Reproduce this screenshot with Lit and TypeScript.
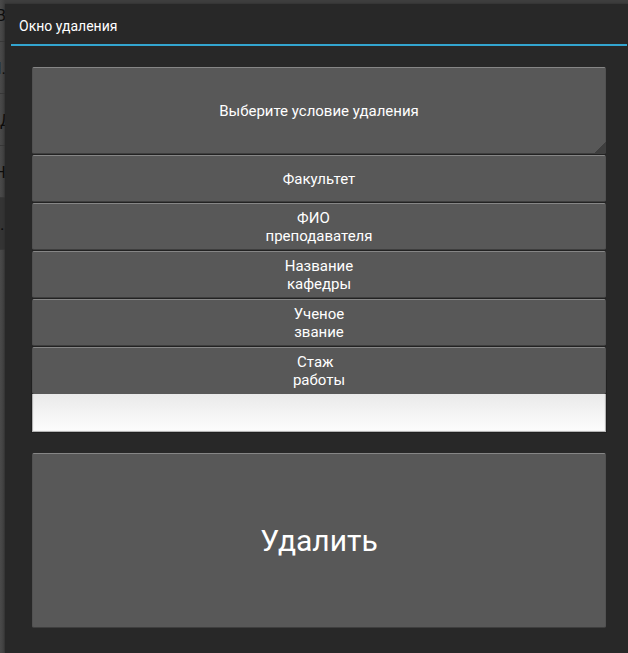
import { LitElement, html, css } from "lit";
import { customElement, state } from "lit/decorators.js";
import { classMap } from "lit/directives/class-map.js";

// Non-breaking spaces at the end of a line take part in its centring.
const CONDITIONS = [
  "Факультет",
  "ФИО\u00a0\u00a0\u00a0\nпреподавателя",
  "Название\nкафедры",
  "Ученое\nзвание",
  "Стаж\u00a0\u00a0\nработы",
];

// Visible ends of the list that the popup covers.
const COVERED = [
  { text: "В", start: false },
  { text: "И.", start: false },
  { text: "Д", start: true },
  { text: "Н", start: false },
  { text: ".П", start: true },
];

@customElement("app-root")
export class AppRoot extends LitElement {
  static styles = css`
    :host {
      display: block;
      min-height: 100vh;
      font-family: Roboto, "Liberation Sans", sans-serif;
      color: #fff;
    }
    * {
      box-sizing: border-box;
    }
    .screen {
      position: relative;
      display: flex;
      min-height: 100vh;
      padding: 4px 0 0 5px;
      overflow: hidden;
      background: linear-gradient(90deg, #4a4a4a, #3e3e3e 5px);
    }
    .behind {
      position: absolute;
      top: 0;
      left: 0;
      width: 6px;
      margin: 0;
      padding: 0;
      list-style: none;
      overflow: hidden;
      color: #0c0c0c;
      font-size: 17px;
      line-height: 52px;
    }
    .behind li {
      display: flex;
      justify-content: flex-end;
      height: 52px;
      border-bottom: 1px solid #383838;
    }
    .behind .start {
      justify-content: flex-start;
    }
    .behind li:first-child {
      height: 42px;
      line-height: 31px;
    }
    .behind li:last-child {
      background: #343434;
    }
    .popup {
      position: relative;
      flex: 1;
      display: flex;
      flex-direction: column;
      min-width: 0;
      padding: 0 1px 25px 6px;
      background: #282828;
      box-shadow: 0 0 2px #282828;
    }
    .title {
      margin: 0;
      padding: 13px 8px 8px;
      border-bottom: 2px solid #33a5d0;
      font-size: 14px;
      font-weight: 400;
      line-height: 19px;
    }
    .form {
      flex: 1;
      display: grid;
      grid-template-rows: 87fr 257fr 175fr;
      gap: 21px;
      margin: 0;
      padding: 21px 21px 0;
    }
    .picker {
      position: relative;
      display: grid;
    }
    .button {
      display: block;
      width: 100%;
      margin: 0;
      padding: 0;
      border: 1px solid #515151;
      border-top-color: #868686;
      border-bottom-color: #3e3e3e;
      border-radius: 2px;
      background: #585858;
      color: inherit;
      font: inherit;
      font-size: 15px;
      line-height: 18px;
      text-align: center;
      white-space: pre-line;
    }
    .spinner {
      position: relative;
    }
    .spinner::after {
      content: "";
      position: absolute;
      right: -1px;
      bottom: 0;
      width: 12px;
      height: 12px;
      background: linear-gradient(135deg, transparent 50%, #3e3e3e 50%);
    }
    .menu {
      position: absolute;
      z-index: 1;
      top: 100%;
      left: 0;
      right: 0;
      background: #222;
    }
    .option {
      height: 47px;
      margin-top: 1px;
    }
    .option:last-child {
      border-bottom-color: #585858;
    }
    .value {
      display: flex;
      align-items: flex-end;
    }
    .input {
      width: 100%;
      height: 61px;
      padding: 8px;
      border: 1px solid #b4b4b4;
      border-radius: 0;
      outline: 1px solid #202020;
      outline-offset: 0;
      background: linear-gradient(#dedede, #fdfdfd);
      box-shadow: inset 0 0 1px #b4b4b4;
      color: #000;
      font: inherit;
      font-size: 15px;
    }
    .delete {
      font-size: 30px;
      line-height: 36px;
    }
  `;

  @state() private open = true;
  @state() private condition = "Выберите условие удаления";

  private pick(value: string) {
    this.condition = value;
    this.open = false;
  }

  render() {
    return html`
      <div class="screen">
        <ul class="behind" aria-hidden="true">
          ${COVERED.map(
            (row) => html`<li class=${classMap({ start: row.start })}>${row.text}</li>`
          )}
        </ul>
        <section class="popup" role="dialog" aria-labelledby="title">
          <h1 class="title" id="title">Окно удаления</h1>
          <form class="form" @submit=${(e: Event) => e.preventDefault()}>
            <div class="picker">
              <button
                class="button spinner"
                type="button"
                aria-haspopup="listbox"
                aria-expanded=${this.open}
                @click=${() => (this.open = !this.open)}
              >${this.condition}</button>
              ${this.open
                ? html`<div class="menu" role="listbox" aria-label="Условие">
                    ${CONDITIONS.map(
                      (c) => html`<button
                        class="button option"
                        type="button"
                        role="option"
                        @click=${() => this.pick(c)}
                      >${c}</button>`
                    )}
                  </div>`
                : null}
            </div>
            <div class="value">
              <input class="input" type="text" aria-label="Значение" />
            </div>
            <button class="button delete" type="submit">Удалить</button>
          </form>
        </section>
      </div>
    `;
  }
}
